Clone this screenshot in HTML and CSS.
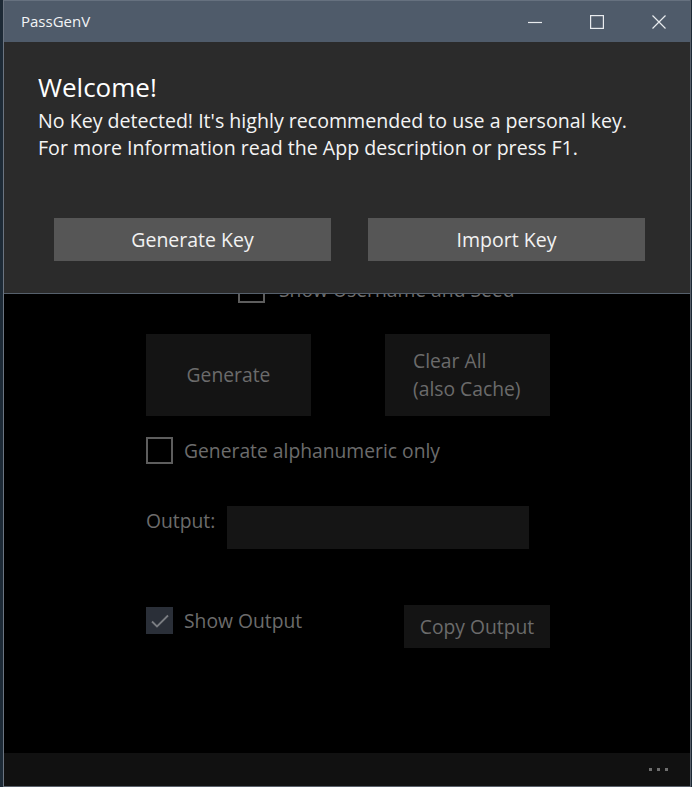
FILE: index.html
```html
<!DOCTYPE html>
<html>
<head>
<meta charset="utf-8">
<link rel="stylesheet" href="styles.css">
</head>
<body>
<div class="desktop">
  <div class="window">
    <div class="titlebar">
      <span class="title">PassGenV</span>
      <div class="caption-buttons">
        <span class="cap-btn"><svg width="14" height="14" viewBox="0 0 14 14"><path d="M0 7.5h14" stroke="#e8ebee" stroke-width="1.2"/></svg></span>
        <span class="cap-btn"><svg width="14" height="14" viewBox="0 0 14 14"><rect x="0.6" y="0.6" width="12.8" height="12.8" fill="none" stroke="#e8ebee" stroke-width="1.2"/></svg></span>
        <span class="cap-btn"><svg width="14" height="14" viewBox="0 0 14 14"><path d="M0.5 0.5L13.5 13.5M13.5 0.5L0.5 13.5" stroke="#e8ebee" stroke-width="1.2"/></svg></span>
      </div>
    </div>
    <div class="content">
      <div class="form">
        <div class="row-top">
          <span class="checkbox"></span>
          <span class="label">Show Username and Seed</span>
        </div>
        <div class="row-buttons">
          <div class="btn big center">Generate</div>
          <div class="btn big left">Clear All<br>(also Cache)</div>
        </div>
        <div class="row-check">
          <span class="checkbox"></span>
          <span class="label">Generate alphanumeric only</span>
        </div>
        <div class="row-output">
          <span class="label">Output:</span>
          <div class="textbox"></div>
        </div>
        <div class="row-show">
          <div class="check-wrap">
            <span class="checkbox checked"><svg width="20" height="16" viewBox="0 0 20 16"><path d="M2 8.5L7 13.5L18 2.5" fill="none" stroke="#7a7d82" stroke-width="1.8"/></svg></span>
            <span class="label">Show Output</span>
          </div>
          <div class="btn copy">Copy Output</div>
        </div>
      </div>
      <div class="dialog">
        <div class="dlg-title">Welcome!</div>
        <div class="dlg-text">No Key detected! It's highly recommended to use a personal key.<br>For more Information read the App description or press F1.</div>
        <div class="dlg-buttons">
          <div class="dlg-btn">Generate Key</div>
          <div class="dlg-btn">Import Key</div>
        </div>
      </div>
    </div>
    <div class="commandbar">
      <span class="dots"><i></i><i></i><i></i></span>
    </div>
  </div>
</div>
</body>
</html>
```
FILE: styles.css
```css
html, body {
  margin: 0;
  padding: 0;
}
body {
  width: 692px;
  height: 787px;
  overflow: hidden;
  background: #1d2a36;
  font-family: "Open Sans", "Noto Sans", sans-serif;
}
.desktop {
  display: flex;
  height: 787px;
  padding-left: 3px;
  padding-right: 1px;
  box-sizing: border-box;
}
.window {
  flex: 1;
  display: flex;
  flex-direction: column;
  border-left: 1px solid #6b7480;
  border-right: 1px solid #5a616b;
  border-bottom: 1px solid #5a616b;
  background: #000;
}
.titlebar {
  height: 42px;
  flex: none;
  background: #4f5b6a;
  border-top: 1px solid #66717f;
  box-sizing: border-box;
  display: flex;
  align-items: center;
  justify-content: space-between;
}
.title {
  color: #f2f4f6;
  font-size: 15px;
  margin-left: 17px;
  margin-top: -1px;
}
.caption-buttons {
  display: flex;
  gap: 0;
  margin-right: 24px;
}
.cap-btn {
  width: 62px;
  display: flex;
  justify-content: flex-end;
  padding-top: 1px;
}
.cap-btn svg { display: block; }
.content {
  flex: 1;
  position: relative;
  background: #000;
}
.form {
  display: flex;
  flex-direction: column;
  margin-left: 142px;
  width: 404px;
  color: #6c6c6c;
  font-size: 19.3px;
}
.checkbox {
  width: 23px;
  height: 23px;
  border: 2px solid #5d5d5d;
  flex: none;
  display: flex;
  align-items: center;
  justify-content: center;
}
.checkbox.checked {
  border: none;
  width: 27px;
  height: 27px;
  background: #2a2f38;
}
.row-top {
  display: flex;
  align-items: center;
  gap: 14px;
  margin-top: 234px;
  margin-left: 92px;
}
.row-buttons {
  display: flex;
  justify-content: space-between;
  margin-top: 31px;
}
.btn {
  background: #141414;
  color: #6b6b6b;
  display: flex;
  align-items: center;
}
.btn.big {
  width: 165px;
  height: 82px;
  line-height: 28px;
}
.btn.center { justify-content: center; }
.btn.left { padding-left: 28px; box-sizing: border-box; }
.row-check {
  display: flex;
  align-items: center;
  gap: 11px;
  margin-top: 21px;
}
.row-output {
  display: flex;
  align-items: flex-start;
  margin-top: 42px;
}
.row-output .label {
  width: 81px;
  margin-top: 1px;
  flex: none;
}
.textbox {
  width: 302px;
  height: 43px;
  background: #151515;
}
.row-show {
  display: flex;
  justify-content: space-between;
  align-items: flex-start;
  margin-top: 56px;
}
.check-wrap {
  display: flex;
  align-items: center;
  gap: 11px;
  margin-top: 2px;
}
.btn.copy {
  width: 146px;
  height: 43px;
  justify-content: center;
}
.dialog {
  position: absolute;
  left: 0;
  right: 0;
  top: 0;
  height: 252px;
  background: #2b2b2b;
  border-bottom: 1px solid #56606c;
  padding: 27px 0 0 34px;
  box-sizing: border-box;
  color: #fff;
}
.dlg-title {
  font-size: 26px;
  line-height: 36px;
}
.dlg-text {
  font-size: 19.6px;
  line-height: 27px;
  margin-top: 2px;
  color: #f4f4f4;
}
.dlg-buttons {
  display: flex;
  gap: 37px;
  margin-top: 57px;
  margin-left: 16px;
}
.dlg-btn {
  width: 277px;
  height: 43px;
  background: #565656;
  color: #f2f2f2;
  font-size: 19.5px;
  display: flex;
  align-items: center;
  justify-content: center;
}
.commandbar {
  height: 33px;
  flex: none;
  background: #111;
  display: flex;
  justify-content: flex-end;
  align-items: center;
}
.dots {
  display: flex;
  gap: 5px;
  margin-right: 22px;
}
.dots i {
  width: 3px;
  height: 3px;
  background: #6e6e6e;
  display: block;
}
```
